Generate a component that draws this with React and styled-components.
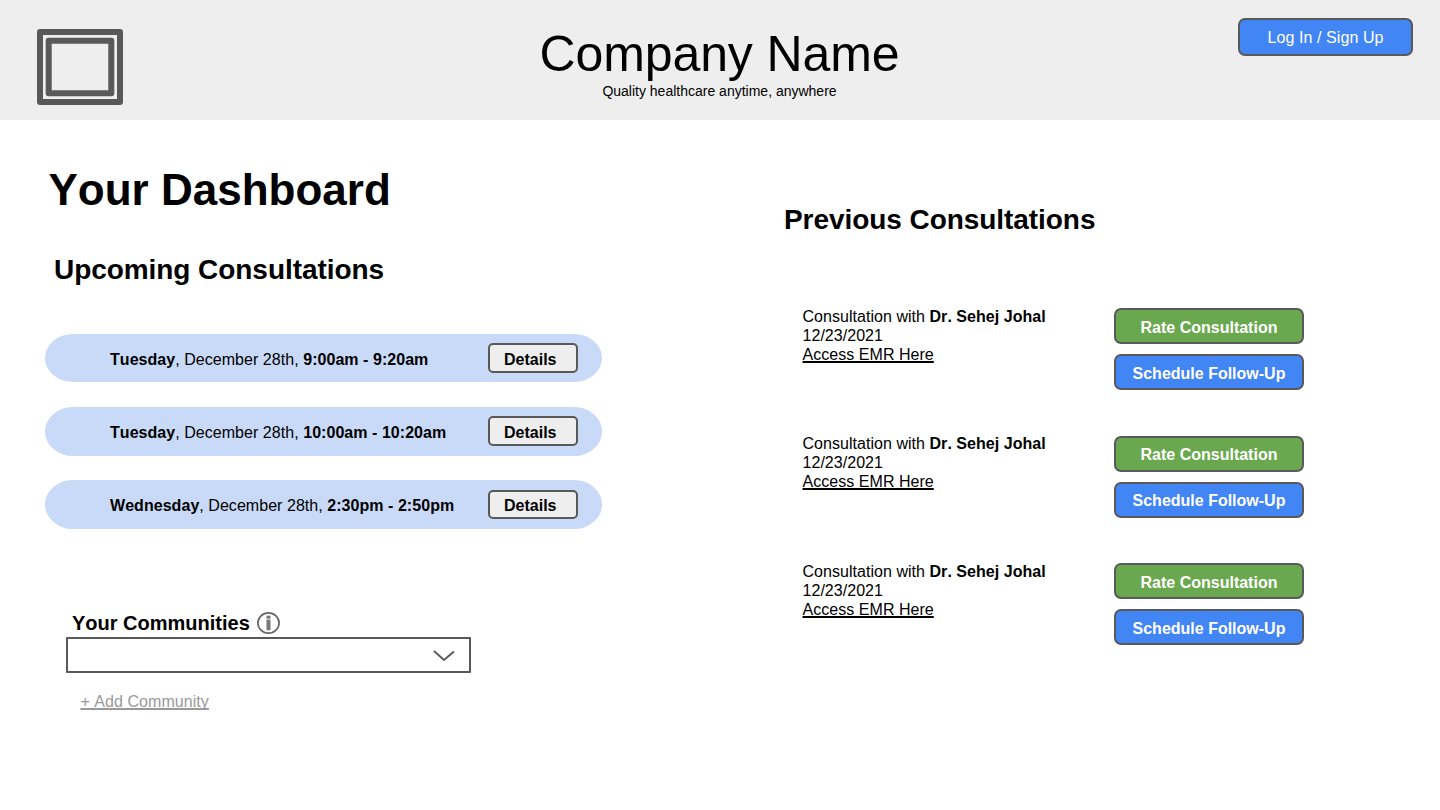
import React from "react";
import styled, { createGlobalStyle } from "styled-components";

const ink = "#595959";
const blue = "#4285f4";
const green = "#6aa84f";

const GlobalStyle = createGlobalStyle`
  *, *::before, *::after { box-sizing: border-box; }
  body {
    margin: 0;
    background: #fff;
    color: #000;
    font: 16px/19px "Liberation Sans", Arial, sans-serif;
    font-kerning: none;
  }
  h1, h2, h3, p { margin: 0; }
  button { font-family: inherit; font-kerning: inherit; cursor: pointer; }
`;

const Page = styled.div`
  width: 1440px;
  height: 810px;
  overflow: hidden;
`;

const Header = styled.header`
  display: grid;
  grid-template-columns: 1fr auto 1fr;
  align-items: start;
  height: 120px;
  padding: 0 27px 0 37px;
  background: #eee;
`;

const Logo = styled.svg`
  display: block;
  margin-top: 29px;
`;

const Brand = styled.div`
  padding: 26px 11px 0 0;
  text-align: center;
`;

const BrandName = styled.p`
  font-size: 50px;
  line-height: 57px;
  letter-spacing: -0.1px;
`;

const Tagline = styled.p`
  font-size: 14px;
  line-height: 16px;
`;

const Button = styled.button`
  display: flex;
  align-items: center;
  justify-content: center;
  width: ${(p) => p.$width || 190}px;
  height: ${(p) => p.$height || 36}px;
  padding: ${(p) => p.$nudge || 0}px 0 0;
  border: 2px solid ${ink};
  border-radius: 7px;
  background: ${(p) => p.$fill};
  color: #fff;
  font-size: 16px;
  font-weight: ${(p) => (p.$regular ? 400 : 700)};
  line-height: 18px;
  white-space: nowrap;
`;

const LoginButton = styled(Button)`
  margin-top: 18px;
  justify-self: end;
  letter-spacing: 0.08px;
`;

const Main = styled.main`
  display: grid;
  grid-template-columns: 784px 1fr;
`;

const LeftColumn = styled.div`
  padding: 45px 0 0 45px;
`;

const PageTitle = styled.h1`
  padding-left: 3.5px;
  font-size: 44px;
  line-height: 50px;
`;

const SectionTitle = styled.h2`
  font-size: 28px;
  line-height: 32px;
  letter-spacing: -0.06px;
`;

const UpcomingTitle = styled(SectionTitle)`
  margin-top: 39px;
  padding-left: 9px;
`;

const UpcomingList = styled.div`
  display: grid;
  grid-template-rows: 48px 49px 49px;
  row-gap: 24.5px;
  width: 557px;
  margin-top: 48px;
`;

const UpcomingRow = styled.div`
  display: flex;
  align-items: flex-start;
  justify-content: space-between;
  padding: 0 24px 0 65px;
  border-radius: 28px / 50%;
  background: #c9daf8;
`;

const UpcomingText = styled.p`
  margin-top: 16px;
  letter-spacing: 0.045px;
`;

const DetailsButton = styled.button`
  width: 90px;
  height: ${(p) => p.$height}px;
  margin-top: ${(p) => p.$top}px;
  padding: ${(p) => p.$nudge}px 0 0 14px;
  border: 2px solid ${ink};
  border-radius: 5px;
  background: #eee;
  color: #000;
  font-size: 16px;
  font-weight: 700;
  line-height: 18px;
  text-align: left;
`;

const Communities = styled.section`
  width: 405px;
  margin: 83px 0 0 21px;
`;

const CommunitiesHeading = styled.div`
  display: flex;
  gap: 7px;
  height: 25px;
  padding-left: 6px;
`;

const CommunitiesTitle = styled.h3`
  font-size: 20px;
  line-height: 22px;
`;

const Select = styled.div`
  display: flex;
  align-items: center;
  justify-content: flex-end;
  height: 36px;
  padding: 2px 14px 0 0;
  border: 2px solid ${ink};
  border-radius: 1px;
`;

const TextLink = styled.a`
  display: block;
  width: fit-content;
  color: ${(p) => p.$color || "#000"};
  text-decoration: underline;
  text-decoration-thickness: 2px;
  text-underline-offset: 1px;
  text-decoration-skip-ink: none;
  cursor: pointer;
`;

const AddCommunity = styled(TextLink)`
  margin: 19px 0 0 14.4px;
  letter-spacing: 0.06px;
`;

const RightColumn = styled.div`
  padding-top: 84px;
`;

const PreviousList = styled.div`
  display: grid;
  grid-template-rows: 128px 127px 82px;
  width: 520px;
  margin-top: 72px;
`;

const PreviousRow = styled.div`
  display: flex;
  justify-content: space-between;
  padding-left: 18.5px;
`;

const PreviousInfo = styled.div`
  margin-top: ${(p) => p.$top}px;
  letter-spacing: 0.04px;
`;

const Actions = styled.div`
  display: flex;
  flex-direction: column;
  gap: 10px;
`;

const upcoming = [
  { day: "Tuesday", date: "December 28th", time: "9:00am - 9:20am", top: 9, height: 30, nudge: 3 },
  { day: "Tuesday", date: "December 28th", time: "10:00am - 10:20am", top: 9, height: 30, nudge: 4 },
  { day: "Wednesday", date: "December 28th", time: "2:30pm - 2:50pm", top: 9.5, height: 29, nudge: 3 },
];

const previous = [
  { doctor: "Dr. Sehej Johal", date: "12/23/2021", top: -1, nudge: 3 },
  { doctor: "Dr. Sehej Johal", date: "12/23/2021", top: -2, nudge: 2 },
  { doctor: "Dr. Sehej Johal", date: "12/23/2021", top: -1, nudge: 3 },
];

const LogoMark = () => (
  <Logo width="86" height="76" viewBox="0 0 86 76" fill="none" stroke={ink} strokeWidth="6" strokeLinejoin="round">
    <rect x="3" y="3" width="80" height="70" />
    <rect x="11.7" y="11.7" width="62.6" height="52.6" />
  </Logo>
);

const InfoIcon = () => (
  <svg width="23" height="22" viewBox="0 0 23 22" fill="none">
    <ellipse cx="11.5" cy="11" rx="10.6" ry="10.1" stroke="#666" strokeWidth="1.7" />
    <rect x="9.5" y="3.7" width="4" height="3" fill="#777" />
    <rect x="9.5" y="7.6" width="4" height="10.6" fill="#777" />
  </svg>
);

const Chevron = () => (
  <svg width="22" height="12" viewBox="0 0 22 12" fill="none">
    <path d="M1 1 L11 10 L21 1.5" stroke={ink} strokeWidth="1.9" />
  </svg>
);

export default function App() {
  return (
    <Page>
      <GlobalStyle />
      <Header>
        <LogoMark />
        <Brand>
          <BrandName>Company Name</BrandName>
          <Tagline>Quality healthcare anytime, anywhere</Tagline>
        </Brand>
        <LoginButton $fill={blue} $width={175} $height={38} $nudge={2} $regular>
          Log In / Sign Up
        </LoginButton>
      </Header>
      <Main>
        <LeftColumn>
          <PageTitle>Your Dashboard</PageTitle>
          <UpcomingTitle>Upcoming Consultations</UpcomingTitle>
          <UpcomingList>
            {upcoming.map((item) => (
              <UpcomingRow key={item.time}>
                <UpcomingText>
                  <b>{item.day}</b>, {item.date}, <b>{item.time}</b>
                </UpcomingText>
                <DetailsButton $top={item.top} $height={item.height} $nudge={item.nudge}>
                  Details
                </DetailsButton>
              </UpcomingRow>
            ))}
          </UpcomingList>
          <Communities>
            <CommunitiesHeading>
              <CommunitiesTitle>Your Communities</CommunitiesTitle>
              <InfoIcon />
            </CommunitiesHeading>
            <Select>
              <Chevron />
            </Select>
            <AddCommunity $color="#999">+ Add Community</AddCommunity>
          </Communities>
        </LeftColumn>
        <RightColumn>
          <SectionTitle>Previous Consultations</SectionTitle>
          <PreviousList>
            {previous.map((item, i) => (
              <PreviousRow key={i}>
                <PreviousInfo $top={item.top}>
                  <p>
                    Consultation with <b>{item.doctor}</b>
                  </p>
                  <p>{item.date}</p>
                  <TextLink>Access EMR Here</TextLink>
                </PreviousInfo>
                <Actions>
                  <Button $fill={green} $nudge={item.nudge}>Rate Consultation</Button>
                  <Button $fill={blue} $nudge={item.nudge}>Schedule Follow-Up</Button>
                </Actions>
              </PreviousRow>
            ))}
          </PreviousList>
        </RightColumn>
      </Main>
    </Page>
  );
}
